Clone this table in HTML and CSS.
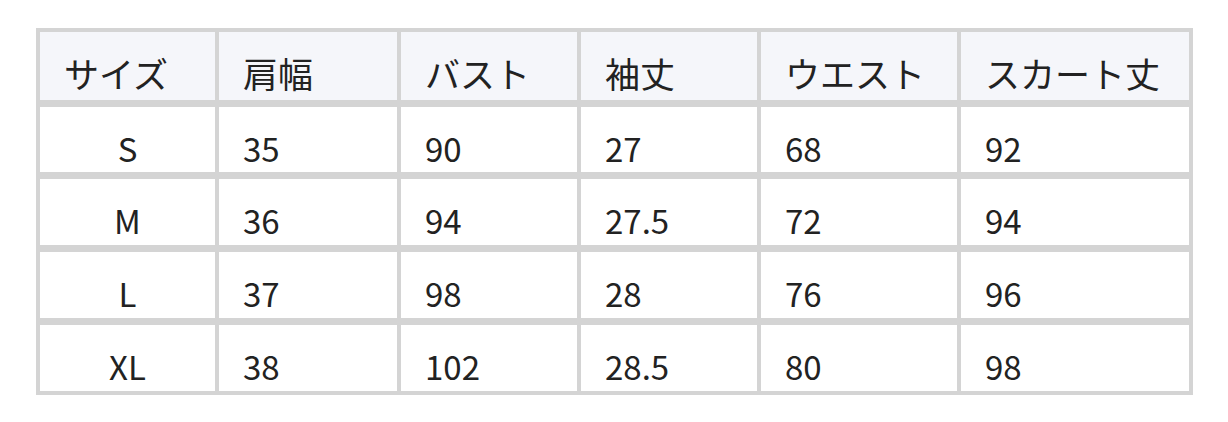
FILE: index.html
```html
<!DOCTYPE html>
<html lang="ja">
<head>
<meta charset="utf-8">
<title>サイズ表</title>
<link rel="stylesheet" href="styles.css">
</head>
<body>
<div class="page">
  <div class="size-table" role="table">
    <div class="cell head first">サイズ</div>
    <div class="cell head">肩幅</div>
    <div class="cell head">バスト</div>
    <div class="cell head">袖丈</div>
    <div class="cell head">ウエスト</div>
    <div class="cell head">スカート丈</div>

    <div class="cell first">S</div>
    <div class="cell">35</div>
    <div class="cell">90</div>
    <div class="cell">27</div>
    <div class="cell">68</div>
    <div class="cell">92</div>

    <div class="cell first">M</div>
    <div class="cell">36</div>
    <div class="cell">94</div>
    <div class="cell">27.5</div>
    <div class="cell">72</div>
    <div class="cell">94</div>

    <div class="cell first">L</div>
    <div class="cell">37</div>
    <div class="cell">98</div>
    <div class="cell">28</div>
    <div class="cell">76</div>
    <div class="cell">96</div>

    <div class="cell first">XL</div>
    <div class="cell">38</div>
    <div class="cell">102</div>
    <div class="cell">28.5</div>
    <div class="cell">80</div>
    <div class="cell">98</div>
  </div>
</div>
</body>
</html>
```

FILE: styles.css
```css
html, body {
  margin: 0;
  padding: 0;
  background: #ffffff;
}

.page {
  padding: 28px 0 0 36px;
}

.size-table {
  display: grid;
  width: max-content;
  grid-template-columns: 175px 178px 176px 176px 196px 228px;
  grid-template-rows: 68px 65px 66px 66px 66px;
  column-gap: 4px;
  row-gap: 7px;
  padding: 4px;
  background: #d4d4d4;
  font-family: "Noto Sans CJK JP", "Noto Sans", sans-serif;
  color: #222222;
}

.cell {
  background: #ffffff;
  padding: 21px 24px 0;
  font-size: 33px;
  line-height: 40px;
  white-space: nowrap;
}

.cell.head {
  background: #f5f6fa;
  font-size: 35px;
}

.cell.first {
  text-align: center;
}

.cell.head.first {
  text-align: left;
}
```
